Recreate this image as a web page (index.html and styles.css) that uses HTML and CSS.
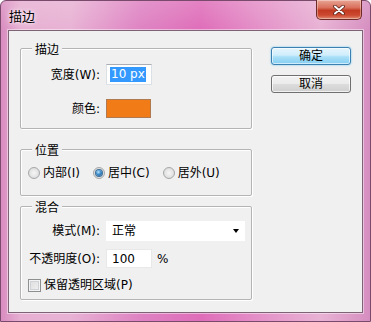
FILE: index.html
```html
<!DOCTYPE html>
<html lang="zh">
<head>
<meta charset="utf-8">
<title>描边</title>
<link rel="stylesheet" href="styles.css">
</head>
<body>
<div class="window">
  <div class="titlebar">
    <span class="title">描边</span>
    <button class="close" aria-label="关闭">
      <svg width="12" height="10" viewBox="0 0 12 10">
        <path d="M2 1.5 L10 8.5 M10 1.5 L2 8.5" stroke="#5a2018" stroke-width="3.6" stroke-linecap="round" fill="none"/>
        <path d="M2 1.5 L10 8.5 M10 1.5 L2 8.5" stroke="#ffffff" stroke-width="2" stroke-linecap="round" fill="none"/>
      </svg>
    </button>
  </div>
  <div class="client">
    <div class="groups">
      <div class="group g1">
        <div class="legend">描边</div>
        <div class="form f1">
          <span class="label">宽度(W):</span>
          <span class="input"><span class="sel">10 px</span></span>
          <span class="label">颜色:</span>
          <span class="swatch"></span>
        </div>
      </div>
      <div class="group g2">
        <div class="legend">位置</div>
        <div class="radios">
          <span class="radio-item"><span class="radio"></span>内部(I)</span>
          <span class="radio-item"><span class="radio checked"></span>居中(C)</span>
          <span class="radio-item"><span class="radio"></span>居外(U)</span>
        </div>
      </div>
      <div class="group g3">
        <div class="legend">混合</div>
        <div class="form f3">
          <span class="label">模式(M):</span>
          <span class="select"><span>正常</span><span class="arrow"></span></span>
          <span class="label">不透明度(O):</span>
          <span class="pct"><span class="input plain">100</span><span class="unit">%</span></span>
          <span class="check-row"><span class="checkbox"></span>保留透明区域(P)</span>
        </div>
      </div>
    </div>
    <div class="buttons">
      <button class="btn primary">确定</button>
      <button class="btn">取消</button>
    </div>
  </div>
</div>
</body>
</html>
```
FILE: styles.css
```css
* { box-sizing: border-box; }
html, body { margin: 0; padding: 0; }
body {
  width: 371px;
  height: 322px;
  overflow: hidden;
  font-family: "DejaVu Sans", "Noto Sans CJK SC", sans-serif;
  font-size: 12px;
  line-height: 14px;
  color: #000;
}
.window {
  width: 371px;
  height: 322px;
  padding: 0 7px 8px;
  display: flex;
  flex-direction: column;
  background:
    linear-gradient(180deg, rgba(255,255,255,0.15) 0px, rgba(255,255,255,0) 30px),
    linear-gradient(90deg, #d98cc0 0px, #e7b0d2 20px, #e8b2d4 70px, #de82c2 140px, #df6db9 200px, #e491c8 260px, #e8b2d4 320px, #d58cbf 371px);
  border: 1px solid #7a4a6c;
  border-radius: 6px 6px 0 0;
}
.titlebar {
  height: 29px;
  display: flex;
  align-items: flex-start;
  flex: none;
}
.title {
  margin-top: 9px;
  padding-left: 1px;
  font-size: 13px;
  text-shadow: 0 0 6px rgba(255,255,255,0.9), 0 0 3px rgba(255,255,255,0.9);
}
.close {
  margin-left: auto;
  margin-right: 1px;
  margin-top: -1px;
  width: 46px;
  height: 20px;
  padding: 0;
  border: 1px solid #6e2a26;
  border-top: none;
  border-radius: 0 0 5px 5px;
  background: linear-gradient(180deg, #e9a596 0%, #d9705c 40%, #c23a22 55%, #cc4a30 80%, #e08a70 100%);
  box-shadow: inset 0 0 0 1px rgba(255,255,255,0.35);
  display: flex;
  align-items: center;
  justify-content: center;
}
.client {
  flex: 1;
  background: #f0f0f0;
  border: 1px solid #7e6276;
  box-shadow: 0 0 0 1px rgba(255,255,255,0.45);
  display: flex;
  padding: 16px 11px 0 11px;
  gap: 19px;
}
.groups {
  width: 232px;
  display: flex;
  flex-direction: column;
  margin-top: 1px;
}
.group {
  border: 1px solid #b4b4b4;
  border-radius: 2px;
  box-shadow: inset 1px 1px 0 #fff, 1px 1px 0 #fff;
}
.legend {
  display: table;
  margin: -6px 0 0 11px;
  padding: 0 3px;
  background: #f0f0f0;
  font-size: 12px;
}
.g1 { padding-bottom: 10px; }
.g2 { margin-top: 20px; padding-bottom: 15px; }
.g3 { margin-top: 10px; padding-bottom: 7px; }
.form {
  display: grid;
  grid-template-columns: 79px auto;
  column-gap: 6px;
  align-items: center;
  justify-items: start;
}
.form .label { justify-self: end; }
.f1 { margin-top: 7px; row-gap: 14px; }
.f3 { margin-top: 6px; row-gap: 8px; }
.input {
  width: 46px;
  height: 21px;
  background: #fff;
  border: 1px solid #dbdfe6;
  border-top-color: #abadb3;
  display: flex;
  align-items: center;
  padding-left: 3px;
}
.input.plain { height: 19px; border-color: #e8e8e8; padding-left: 5px; }
.sel {
  background: #3399ff;
  color: #fff;
  padding: 0 1px;
  line-height: 15px;
}
.swatch {
  width: 45px;
  height: 19px;
  background: #f07b17;
  border: 1px solid #b07a50;
}
.radios {
  display: flex;
  margin-top: 8px;
  padding-left: 7px;
  align-items: center;
}
.radio-item {
  display: flex;
  align-items: center;
  margin-right: 13px;
}
.radio {
  width: 12px;
  height: 12px;
  border-radius: 50%;
  border: 1px solid #a5a7a9;
  background: radial-gradient(circle at 50% 50%, #f6f6f6 0%, #e2e2e2 60%, #d8d8d8 100%);
  margin-right: 3px;
  display: flex;
  align-items: center;
  justify-content: center;
}
.radio.checked::after {
  content: "";
  width: 6px;
  height: 6px;
  border-radius: 50%;
  background: radial-gradient(circle at 40% 35%, #b9e6fb 0%, #3c8ccb 45%, #1c4e80 100%);
  box-shadow: 0 0 0 1px #3d6e99;
}
.select {
  width: 139px;
  height: 20px;
  background: #fff;
  display: flex;
  align-items: center;
  justify-content: space-between;
  padding: 0 6px 0 6px;
}
.arrow {
  width: 0;
  height: 0;
  border-left: 3.5px solid transparent;
  border-right: 3.5px solid transparent;
  border-top: 4px solid #000;
}
.pct { display: flex; align-items: center; }
.unit { margin-left: 5px; }
.check-row {
  grid-column: 1 / 3;
  display: flex;
  align-items: center;
  padding-left: 7px;
  margin-top: 2px;
}
.checkbox {
  width: 13px;
  height: 13px;
  border: 1px solid #8e8f8f;
  background: linear-gradient(135deg, #dcdcdc 0%, #f2f2f2 100%);
  box-shadow: inset 0 0 0 1px #f4f4f4, inset 0 0 0 2px #cfd2d6;
  margin-right: 3px;
}
.buttons {
  width: 80px;
  display: flex;
  flex-direction: column;
  gap: 10px;
}
.btn {
  width: 80px;
  height: 18px;
  padding: 0;
  font-family: inherit;
  font-size: 12px;
  line-height: 14px;
  color: #000;
  border: 1px solid #707070;
  border-radius: 3px;
  background: linear-gradient(180deg, #f2f2f2 0%, #ebebeb 50%, #dddddd 50%, #cfcfcf 100%);
  box-shadow: inset 0 0 0 1px rgba(255,255,255,0.7);
}
.btn.primary {
  border-color: #3c7fb1;
  background: linear-gradient(180deg, #e6f5fd 0%, #cfeefc 45%, #a9dff8 55%, #86cef2 100%);
  box-shadow: inset 0 0 0 1px rgba(255,255,255,0.6), 0 0 2px #5cc3f2;
}
```
